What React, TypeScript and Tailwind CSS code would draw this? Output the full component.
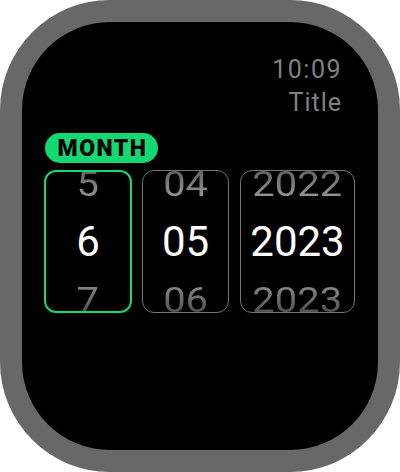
import React from "react";

const font = { fontFamily: "Roboto, 'Liberation Sans', sans-serif" };

function Column({
  values,
  width,
  active,
}: {
  values: [string, string, string];
  width: string;
  active?: boolean;
}) {
  return (
    <div
      className={`${width} h-[143px] rounded-[12px] overflow-hidden flex flex-col items-center justify-center ${
        active ? "border-2 border-[#14d872]" : "border border-[#747474]"
      }`}
    >
      <div className="h-[59px] shrink-0 flex items-center justify-center">
        <span className="text-[42px] leading-[57px] scale-y-[0.85] scale-x-95 bg-gradient-to-b from-[#505050] to-[#a8a8a8] bg-clip-text text-transparent">
          {values[0]}
        </span>
      </div>
      <div className="h-[57px] shrink-0 flex items-center justify-center">
        <span className="text-[42px] leading-[57px] text-white">{values[1]}</span>
      </div>
      <div className="h-[59px] shrink-0 flex items-center justify-center">
        <span className="text-[42px] leading-[57px] scale-y-[0.85] scale-x-95 bg-gradient-to-b from-[#a0a0a0] to-[#3a3a3a] bg-clip-text text-transparent">
          {values[2]}
        </span>
      </div>
    </div>
  );
}

export default function App() {
  return (
    <div className="w-[400px] h-[472px] bg-white" style={font}>
      <div className="w-full h-full rounded-[110px] bg-[#686868] p-[22px]">
        <div className="w-full h-full rounded-[88px] bg-black pt-[31px] pl-[22px] pr-[23px] flex flex-col">
          <div className="flex flex-col items-end pr-[13px] text-[25px] leading-[33px] text-[#808080] tracking-[1.5px]">
            <div>10:09</div>
            <div className="tracking-[1px]">Title</div>
          </div>
          <div className="mt-[14px] ml-px w-[113px] h-[30px] rounded-full bg-[#14d872] flex items-center justify-center">
            <span className="text-[23px] font-black text-black tracking-[1.5px] leading-none pl-[2px]">
              MONTH
            </span>
          </div>
          <div className="mt-[7px] flex">
            <Column values={["5", "6", "7"]} width="w-[88px]" active />
            <div className="w-[10px]" />
            <Column values={["04", "05", "06"]} width="w-[87px]" />
            <div className="w-[11px]" />
            <Column values={["2022", "2023", "2023"]} width="w-[115px]" />
          </div>
        </div>
      </div>
    </div>
  );
}
